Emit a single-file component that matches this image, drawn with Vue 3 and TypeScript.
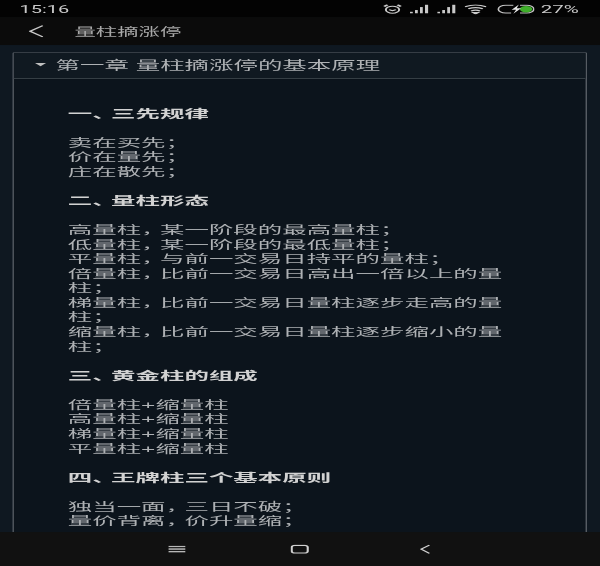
<script setup lang="ts">
interface Block { kind: 'h' | 'p'; lines: string[] }
interface Segment { text: string; narrow: boolean }

const blocks: Block[] = [
  { kind: 'h', lines: ['一、三先规律'] },
  { kind: 'p', lines: ['卖在买先；', '价在量先；', '庄在散先；'] },
  { kind: 'h', lines: ['二、量柱形态'] },
  { kind: 'p', lines: ['高量柱，某一阶段的最高量柱；', '低量柱，某一阶段的最低量柱；', '平量柱，与前一交易日持平的量柱；', '倍量柱，比前一交易日高出一倍以上的量', '柱；', '梯量柱，比前一交易日量柱逐步走高的量', '柱；', '缩量柱，比前一交易日量柱逐步缩小的量', '柱；'] },
  { kind: 'h', lines: ['三、黄金柱的组成'] },
  { kind: 'p', lines: ['倍量柱+缩量柱', '高量柱+缩量柱', '梯量柱+缩量柱', '平量柱+缩量柱'] },
  { kind: 'h', lines: ['四、王牌柱三个基本原则'] },
  { kind: 'p', lines: ['独当一面，三日不破；', '量价背离，价升量缩；'] },
]
const segments = (line: string): Segment[] =>
  line.split(/([，、])/).filter(Boolean).map((text) => ({ text, narrow: text === '，' || text === '、' }))
const signals = [0, 1]
</script>

<template>
  <div class="viewport">
    <div class="stage">
      <header class="status">
        <span class="clock">15:16</span>
        <div class="status-right">
          <svg class="alarm" viewBox="0 0 34 34" fill="none" stroke="#c9c9c9" stroke-width="3.5">
            <ellipse cx="17" cy="19" rx="12" ry="12" />
            <path d="M2 8 8 2M32 8 26 2" stroke-width="5" />
            <path d="M11 19q6 6 12 0" />
          </svg>
          <svg v-for="s in signals" :key="s" class="signal" viewBox="0 0 33 34" fill="#c9c9c9">
            <rect x="0" y="26" width="5" height="5" />
            <rect x="9" y="20" width="5" height="11" />
            <rect x="18" y="10" width="5" height="21" />
            <rect x="27" y="2" width="6" height="29" />
          </svg>
          <svg class="wifi" viewBox="0 0 40 34" fill="none" stroke="#c9c9c9" stroke-width="4">
            <path d="M1 9q19-12 38 0M7 16q13-8 26 0M12 23q8-5 16 0" />
            <path d="M16 29l4 4 4-4z" fill="#c9c9c9" />
          </svg>
          <svg class="battery" viewBox="0 0 68 34" fill="none">
            <path d="M30 4H16a13 13 0 0 0 0 26H26M42 4H54a13 13 0 0 1 0 26H42" stroke="#c4c4c4" stroke-width="3" />
            <circle cx="53" cy="17" r="11" fill="#3fae2a" />
            <path d="M40 1 27 19h8l-5 14 14-19h-8z" fill="#e8e8e8" />
          </svg>
          <span class="percent">27%</span>
        </div>
      </header>

      <nav class="toolbar">
        <svg class="back" viewBox="0 0 26 42" fill="none" stroke="#c8c8c8" stroke-width="4">
          <path d="M25 2 2 21l23 19" />
        </svg>
        <span class="title">量柱摘涨停</span>
      </nav>

      <main class="content">
        <section class="card">
          <div class="card-head">
            <i class="caret"></i>
            <span class="head-text">第一章 量柱摘涨停的基本原理</span>
          </div>
          <div class="card-body">
            <div v-for="(b, i) in blocks" :key="i" :class="b.kind === 'h' ? 'heading' : 'para'">
              <div v-for="(l, j) in b.lines" :key="j" class="line"><template v-for="(s, k) in segments(l)" :key="k"><span v-if="s.narrow" class="punct">{{ s.text }}</span><template v-else>{{ s.text }}</template></template></div>
            </div>
          </div>
        </section>
      </main>

      <footer class="navbar">
        <svg class="nav-menu" viewBox="0 0 31 24" fill="#b8b8b8">
          <rect y="0" width="31" height="5" />
          <rect y="9" width="31" height="5" />
          <rect y="18" width="31" height="5" />
        </svg>
        <svg class="nav-home" viewBox="0 0 33 32" fill="none" stroke="#d0d0d0" stroke-width="4">
          <rect x="2" y="3" width="29" height="26" rx="6" />
        </svg>
        <svg class="nav-back" viewBox="0 0 18 32" fill="none" stroke="#d0d0d0" stroke-width="3.5">
          <path d="M17 2 2 16l15 14" />
        </svg>
      </footer>
    </div>
  </div>
</template>

<style scoped>
.viewport {
  width: 600px;
  height: 566px;
  overflow: hidden;
  background: #0e1720;
}
.stage {
  width: 1080px;
  height: 1920px;
  transform: scale(0.55556, 0.29479);
  transform-origin: 0 0;
  display: flex;
  flex-direction: column;
  filter: blur(0.9px);
  font-family: "Liberation Sans", "Noto Sans CJK SC", sans-serif;
}
.status {
  height: 58px;
  flex: none;
  background: #030303;
  display: flex;
  align-items: center;
  justify-content: space-between;
  padding: 3px 38px 0 35px;
  box-sizing: border-box;
  color: #c9c9c9;
}
.clock {
  font-family: Roboto, sans-serif;
  font-size: 36px;
  line-height: 44px;
}
.status-right {
  display: flex;
  align-items: center;
}
.alarm { width: 35px; height: 34px; margin-right: -2px; }
.signal { width: 33px; height: 34px; margin-left: 16px; }
.wifi { width: 40px; height: 34px; margin-left: 16px; }
.battery { width: 68px; height: 34px; margin-left: 18px; }
.percent {
  font-family: Roboto, sans-serif;
  font-size: 37px;
  line-height: 44px;
  margin-left: 11px;
}
.toolbar {
  height: 95px;
  flex: none;
  background: #0b0b0b;
  display: flex;
  align-items: center;
  padding-left: 52px;
  box-sizing: border-box;
}
.back { width: 26px; height: 42px; }
.title {
  margin-left: 56px;
  padding-top: 6px;
  font-size: 38.5px;
  line-height: 60px;
  color: #a9a9a9;
}
.content {
  flex: 1;
  min-height: 0;
  overflow: hidden;
  background: #0f1821;
  padding: 23px 23px 0 22px;
}
.card {
  height: 100%;
  box-sizing: border-box;
  border: 3px solid #565c63;
  border-bottom: none;
  border-radius: 6px 6px 0 0;
  background: #0c141c;
  color: #aeb1b4;
}
.card-head {
  height: 86px;
  box-sizing: content-box;
  border-bottom: 3px solid #3c434a;
  display: flex;
  align-items: center;
  font-size: 44px;
  padding-left: 38px;
  background: #101921;
}
.head-text {
  display: inline-block;
  transform: translateY(-3px) scaleY(0.95);
}
.caret {
  width: 0;
  height: 0;
  border-left: 10px solid transparent;
  border-right: 10px solid transparent;
  border-top: 11px solid #c0c0c0;
  margin-right: 17px;
  transform: translateY(-3px);
}
.card-body {
  padding: 93px 130px 0 97px;
  display: flex;
  flex-direction: column;
  gap: 50px;
  font-size: 44px;
  line-height: 49.2px;
}
.line {
  white-space: nowrap;
  transform: scaleY(0.88);
}
.heading {
  font-weight: 700;
  color: #d2d2d2;
}
.punct {
  letter-spacing: -10px;
}
.navbar {
  height: 115px;
  flex: none;
  background: #111111;
  display: flex;
  align-items: center;
  padding-left: 303px;
}
.nav-menu { width: 31px; height: 24px; }
.nav-home { width: 33px; height: 32px; margin-left: 189px; }
.nav-back { width: 18px; height: 32px; margin-left: 200px; }
</style>

<style>
body { background: #0e1720; }
</style>
